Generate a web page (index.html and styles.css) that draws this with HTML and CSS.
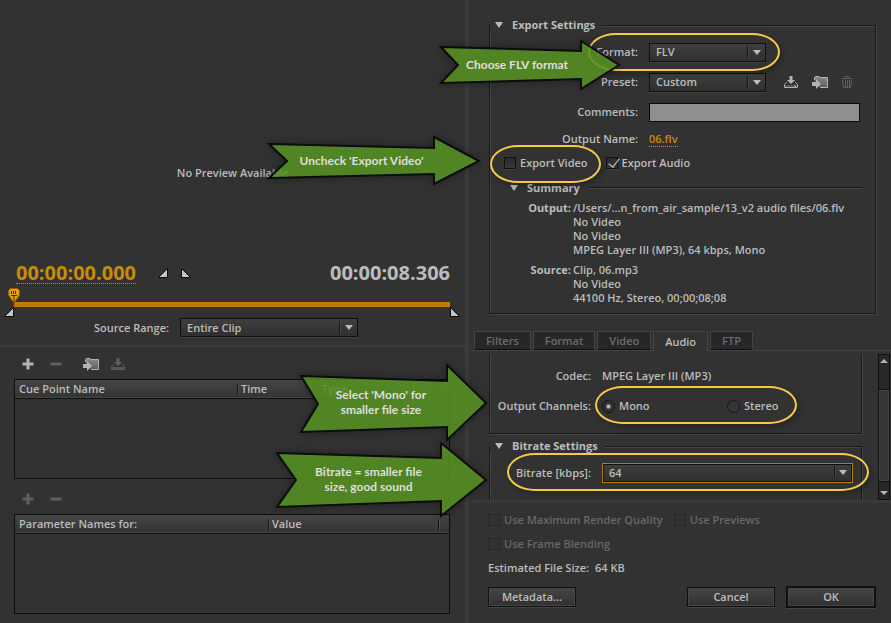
FILE: index.html
```html
<!DOCTYPE html>
<html lang="en">
<head>
    <meta charset="UTF-8">
    <meta name="viewport" content="width=device-width, initial-scale=1.0">
    <title>Export Settings</title>
    <link rel="stylesheet" href="styles.css">
</head>
<body>

    <!-- Shared icons -->
    <svg class="icon-defs" aria-hidden="true">
        <linearGradient id="metal" x1="0" y1="0" x2="0" y2="1">
            <stop offset="0" stop-color="#8c8c8c"/>
            <stop offset="1" stop-color="#5c5c5c"/>
        </linearGradient>
        <symbol id="icon-save" viewBox="0 0 16 14">
            <path d="M4 7.5 H3.5 L1.5 9.5 V12.5 H14.5 V9.5 L12.5 7.5 H12" fill="none" stroke="currentColor"/>
            <path d="M2 10 H14 V12 H2 Z" fill="#555"/>
            <path d="M6.5 1 H9.5 V5 H12 L8 9 L4 5 H6.5 Z" fill="currentColor"/>
            <path d="M11 11 H13" stroke="currentColor"/>
        </symbol>
        <symbol id="icon-import" viewBox="0 0 18 14">
            <path d="M3.5 5 V2.5 L4.5 1.5 H8 L9 2.5 H16.5 V12.5 H9" fill="url(#metal)" stroke="currentColor"/>
            <path d="M1 7 H5 V4 L10 9 L5 14 V11 H1 Z" fill="currentColor"/>
        </symbol>
        <symbol id="icon-trash" viewBox="0 0 12 14">
            <path d="M0.5 3.5 H11.5 M4 3 V1.5 H8 V3 M1.5 5 L2.5 12.5 H9.5 L10.5 5 M4.5 5 V12 M6.5 5 V12 M8.5 5 V12" fill="none" stroke="currentColor"/>
        </symbol>
        <symbol id="icon-plus" viewBox="0 0 12 12">
            <path d="M6 0.5 V11.5 M0.5 6 H11.5" stroke="currentColor" stroke-width="3"/>
        </symbol>
        <symbol id="icon-minus" viewBox="0 0 12 12">
            <path d="M0.5 6 H11.5" stroke="currentColor" stroke-width="3"/>
        </symbol>
        <symbol id="icon-in" viewBox="0 0 10 10">
            <path d="M0.5 9.5 H9.5 V0.5 Z" fill="#c4c4c4" stroke="#0c0c0c"/>
        </symbol>
        <symbol id="icon-out" viewBox="0 0 10 10">
            <path d="M0.5 0.5 V9.5 H9.5 Z" fill="#c4c4c4" stroke="#0c0c0c"/>
        </symbol>
    </svg>

    <div class="dialog">

        <!-- Preview, timeline and cue points -->
        <div class="left-side">
            <section class="preview">
                <p class="no-preview">No Preview Available</p>
                <div class="timecodes">
                    <a class="timecode current" href="#">00:00:00.000</a>
                    <span class="in-out">
                        <button class="icon-btn" aria-label="Set in point"><svg width="10" height="10"><use href="#icon-in"/></svg></button>
                        <button class="icon-btn" aria-label="Set out point"><svg width="10" height="10"><use href="#icon-out"/></svg></button>
                    </span>
                    <span class="timecode">00:00:08.306</span>
                </div>
                <div class="timeline">
                    <svg class="playhead" width="12" height="19" viewBox="0 0 12 19">
                        <path d="M6 13 V19" stroke="#e01010"/>
                        <path d="M2.5 0.5 H9.5 L11.5 2.5 V7 L7 13.5 H5 L0.5 7 V2.5 Z" fill="#e2a00c" stroke="#8f6200"/>
                        <path d="M3.5 3 V6 M5.5 3 V6 M7.5 3 V6 M3 7.5 H9 M6 8 V13" stroke="#4a3300"/>
                    </svg>
                    <svg class="mark-in" width="10" height="10"><use href="#icon-in"/></svg>
                    <svg class="mark-out" width="10" height="10"><use href="#icon-out"/></svg>
                </div>
                <div class="source-range">
                    <label for="range">Source Range:</label>
                    <span class="select"><select id="range"><option>Entire Clip</option></select></span>
                </div>
            </section>

            <section class="cue-points">
                <div class="toolbar">
                    <button class="icon-btn" aria-label="Add cue point"><svg width="12" height="12"><use href="#icon-plus"/></svg></button>
                    <button class="icon-btn off" aria-label="Remove cue point"><svg width="12" height="12"><use href="#icon-minus"/></svg></button>
                    <button class="icon-btn import" aria-label="Import cue points"><svg width="18" height="14"><use href="#icon-import"/></svg></button>
                    <button class="icon-btn off" aria-label="Save cue points"><svg width="16" height="14"><use href="#icon-save"/></svg></button>
                </div>
                <div class="list">
                    <table class="cue-table">
                        <thead>
                            <tr><th>Cue Point Name</th><th>Time</th><th>Type</th><th></th></tr>
                        </thead>
                    </table>
                </div>
                <div class="toolbar second">
                    <button class="icon-btn off" aria-label="Add parameter"><svg width="12" height="12"><use href="#icon-plus"/></svg></button>
                    <button class="icon-btn off" aria-label="Remove parameter"><svg width="12" height="12"><use href="#icon-minus"/></svg></button>
                </div>
                <div class="list">
                    <table class="param-table">
                        <thead>
                            <tr><th>Parameter Names for:</th><th>Value</th><th></th></tr>
                        </thead>
                    </table>
                </div>
            </section>
        </div>

        <div class="splitter"></div>

        <!-- Export settings -->
        <div class="right-side">
            <fieldset class="group export">
                <legend>Export Settings</legend>
                <div class="row">
                    <label for="format">Format:</label>
                    <span class="select"><select id="format"><option>FLV</option></select></span>
                </div>
                <div class="row">
                    <label for="preset">Preset:</label>
                    <span class="select"><select id="preset"><option>Custom</option></select></span>
                    <span class="preset-icons">
                        <button class="icon-btn" aria-label="Save preset"><svg width="16" height="14"><use href="#icon-save"/></svg></button>
                        <button class="icon-btn" aria-label="Import preset"><svg width="18" height="14"><use href="#icon-import"/></svg></button>
                        <button class="icon-btn off" aria-label="Delete preset"><svg width="12" height="14"><use href="#icon-trash"/></svg></button>
                    </span>
                </div>
                <div class="row">
                    <label for="comments">Comments:</label>
                    <input type="text" id="comments" class="comments">
                </div>
                <div class="row name-row">
                    <span class="label">Output Name:</span>
                    <a class="file-link" href="#">06.flv</a>
                </div>
                <div class="checks">
                    <label><input type="checkbox">Export Video</label>
                    <label><input type="checkbox" checked>Export Audio</label>
                </div>
                <h2 class="summary-title">Summary</h2>
                <dl class="summary">
                    <dt>Output:</dt>
                    <dd>/Users/...n_from_air_sample/13_v2 audio files/06.flv<br>No Video<br>No Video<br>MPEG Layer III (MP3), 64 kbps, Mono</dd>
                    <dt>Source:</dt>
                    <dd>Clip, 06.mp3<br>No Video<br>44100 Hz, Stereo, 00;00;08;08</dd>
                </dl>
            </fieldset>

            <nav class="tabs">
                <button class="tab">Filters</button>
                <button class="tab">Format</button>
                <button class="tab">Video</button>
                <button class="tab active">Audio</button>
                <button class="tab">FTP</button>
            </nav>

            <div class="tab-panel">
                <div class="scroll-content">
                    <fieldset class="group audio">
                        <legend>Basic Audio Settings</legend>
                        <div class="row">
                            <span class="label">Codec:</span>
                            <span>MPEG Layer III (MP3)</span>
                        </div>
                        <div class="row">
                            <span class="label">Output Channels:</span>
                            <span class="channels">
                                <label><input type="radio" name="channels" checked>Mono</label>
                                <label><input type="radio" name="channels">Stereo</label>
                            </span>
                        </div>
                    </fieldset>
                    <fieldset class="group audio bitrate">
                        <legend>Bitrate Settings</legend>
                        <div class="row">
                            <label for="bitrate">Bitrate [kbps]:</label>
                            <span class="select focused"><select id="bitrate"><option>64</option></select></span>
                        </div>
                    </fieldset>
                </div>
                <div class="scrollbar">
                    <span class="arrow up"></span>
                    <span class="thumb"></span>
                    <span class="arrow down"></span>
                </div>
            </div>

            <div class="bottom">
                <div class="options">
                    <label><input type="checkbox" disabled>Use Maximum Render Quality</label>
                    <label><input type="checkbox" disabled>Use Previews</label>
                </div>
                <div class="options">
                    <label><input type="checkbox" disabled>Use Frame Blending</label>
                </div>
                <p class="file-size">Estimated File Size: <span>64 KB</span></p>
                <div class="buttons">
                    <button class="btn">Metadata...</button>
                    <button class="btn cancel">Cancel</button>
                    <button class="btn ok">OK</button>
                </div>
            </div>
        </div>

        <!-- Tutorial highlights -->
        <div class="ring ring-format"></div>
        <div class="ring ring-video"></div>
        <div class="ring ring-channels"></div>
        <div class="ring ring-bitrate"></div>

        <div class="callout callout-format">
            <svg width="184" height="54"><path d="M4 8 L144 12 V2 L182 26 L144 50 V40 L4 44 L21 26 Z"/></svg>
            <p>Choose FLV format</p>
        </div>
        <div class="callout callout-video">
            <svg width="217" height="54"><path d="M4 9 L169 13 V2 L214 26 L169 49 V39 L4 43 L22 26 Z"/></svg>
            <p>Uncheck 'Export Video'</p>
        </div>
        <div class="callout callout-channels">
            <svg width="192" height="82"><path d="M4 14 L150 19 V3 L189 41 L150 78 V65 L4 70 L21 42 Z"/></svg>
            <p>Select 'Mono' for<br>smaller file size</p>
        </div>
        <div class="callout callout-bitrate">
            <svg width="215" height="80"><path d="M4 13 L168 18 V3 L213 40 L168 76 V61 L4 67 L23 40 Z"/></svg>
            <p>Bitrate = smaller file<br>size, good sound</p>
        </div>
    </div>

</body>
</html>
```
FILE: styles.css
```css
* {
    box-sizing: border-box;
}

body {
    margin: 0;
    background: #323232;
    color: #bcbcbc;
    font-family: 'Open Sans', 'Noto Sans', sans-serif;
    font-size: 11px;
    font-weight: 600;
    line-height: 14px;
}

button, input, select {
    font: inherit;
    color: inherit;
}

p, h2, dl, dd {
    margin: 0;
}

.icon-defs {
    position: absolute;
    width: 0;
    height: 0;
}

.dialog {
    position: relative;
    display: grid;
    grid-template-columns: 1fr 6px 420px;
    min-height: 100vh;
    border-bottom: 1px solid #666;
}

.splitter {
    background: linear-gradient(to right, #3e3e3e, #383838 60%, #2e2e2e);
}

.icon-btn {
    display: flex;
    padding: 0;
    border: none;
    background: none;
    color: #b4b4b4;
}

.icon-btn.off {
    color: #5e5e5e;
}

/* Select boxes */
.select {
    position: relative;
    display: block;
    width: 117px;
}

.select select {
    display: block;
    appearance: none;
    width: 100%;
    height: 19px;
    padding: 0 6px;
    border: 1px solid #101010;
    border-radius: 0;
    background: linear-gradient(#3f3f3f, #2f2f2f);
    box-shadow: 0 1px 0 #404040;
    outline: none;
}

.select::before {
    content: '';
    position: absolute;
    top: 3px;
    right: 17px;
    width: 2px;
    height: 12px;
    background: linear-gradient(to right, #161616 50%, #484848 50%);
}

.select::after {
    content: '';
    position: absolute;
    top: 7px;
    right: 5px;
    border: 4px solid transparent;
    border-top: 5px solid #bcbcbc;
    border-bottom: none;
}

.select.focused select {
    height: 20px;
    border-color: #b87c00;
    box-shadow: inset 0 0 0 1px #101010;
}

.select.focused::after {
    right: 6px;
}

/* Left side */
.left-side {
    display: flex;
    flex-direction: column;
}

.preview {
    padding-bottom: 8px;
    border-bottom: 1px solid #404040;
}

.no-preview {
    padding: 166px 0 82px;
    text-align: center;
}

.timecodes {
    display: flex;
    align-items: flex-start;
    margin: 0 15px 0 16px;
}

.timecode {
    font-size: 20px;
    font-weight: 700;
    line-height: 21px;
}

.timecode.current {
    color: #c68c06;
    text-decoration: none;
    border-bottom: 1px dotted #c68c06;
}

.in-out {
    display: flex;
    flex: 1;
    gap: 13px;
    margin: 6px 0 0 22px;
}

.timeline {
    position: relative;
    height: 5px;
    margin: 18px 15px 11px 14px;
    background: #bb8003;
}

.playhead {
    position: absolute;
    left: -6px;
    top: -14px;
}

.mark-in {
    position: absolute;
    left: -10px;
    top: 5px;
}

.mark-out {
    position: absolute;
    right: -10px;
    top: 5px;
}

.source-range {
    display: flex;
    align-items: center;
    gap: 11px;
    margin-left: 94px;
}

.source-range .select {
    width: 178px;
}

.cue-points {
    flex: 1;
    display: flex;
    flex-direction: column;
    padding: 9px 15px 10px 14px;
    border-top: 2px solid #383838;
}

.toolbar {
    display: flex;
    align-items: center;
    gap: 16px;
    height: 14px;
    margin: 0 0 8px 8px;
}

.toolbar .import {
    margin: 0 -6px 0 4px;
}

.toolbar.second {
    margin-top: 13px;
}

.list {
    flex: 1;
    border: 1px solid #0e0e0e;
}

.list table {
    width: 100%;
    table-layout: fixed;
    border-collapse: collapse;
}

.list tr {
    background: linear-gradient(#464646, #343434);
    border-bottom: 1px solid #0e0e0e;
}

.list th {
    position: relative;
    height: 18px;
    padding: 0 4px;
    text-align: left;
    font-weight: 600;
}

.list th + th::before {
    content: '';
    position: absolute;
    left: 0;
    top: 4px;
    width: 2px;
    height: 11px;
    background: linear-gradient(to right, #161616 50%, #505050 50%);
}

.list th:last-child {
    width: 11px;
}

.cue-table th:nth-child(1) {
    width: 222px;
}

.cue-table th:nth-child(2) {
    width: 81px;
}

.param-table th:nth-child(1) {
    width: 253px;
}

/* Right side */
.right-side {
    display: flex;
    flex-direction: column;
    padding-top: 18px;
}

.group {
    min-width: 0;
    margin: 0;
    padding: 0;
    border: 1px solid #181818;
    box-shadow: 1px 1px 0 #444, inset 1px 1px 0 #444;
}

.group legend,
.summary-title {
    display: flex;
    align-items: center;
    gap: 9px;
    padding: 0 6px 0 5px;
    font-size: 11px;
    font-weight: 700;
    background: #323232;
}

.group legend::before,
.summary-title::before {
    content: '';
    border: 4px solid transparent;
    border-top: 6px solid #bcbcbc;
    border-bottom: none;
}

.export {
    height: 296px;
    margin: 0 15px 0 18px;
}

.row {
    display: grid;
    grid-template-columns: 148px auto 1fr;
    align-items: center;
    column-gap: 11px;
    height: 30px;
}

.row > :first-child {
    text-align: right;
}

.export .row:nth-of-type(1) {
    margin-top: 5px;
}

.preset-icons {
    display: flex;
    gap: 12px;
    margin-left: 6px;
}

.comments {
    grid-column: 2 / 4;
    width: 211px;
    height: 19px;
    border: 1px solid #0a0a0a;
    border-radius: 0;
    background: #8f8f8f;
}

.name-row {
    height: 24px;
}

.file-link {
    color: #c68c06;
    text-decoration: none;
    border-bottom: 1px dotted #c68c06;
}

input[type="checkbox"] {
    position: relative;
    appearance: none;
    width: 12px;
    height: 12px;
    margin: 0;
    border: 1px solid #121212;
    background: linear-gradient(#2b2b2b, #383838);
    box-shadow: 0 1px 0 #404040;
}

input[type="checkbox"]:checked::after {
    content: '';
    position: absolute;
    left: 4px;
    top: -2px;
    width: 5px;
    height: 10px;
    border: solid #d0d0d0;
    border-width: 0 1px 1px 0;
    transform: rotate(38deg);
}

input[type="checkbox"]:disabled {
    border-color: #262626;
    background: #323232;
    box-shadow: none;
}

.checks {
    display: flex;
    gap: 18px;
    height: 24px;
    margin-left: 14px;
}

.checks label,
.options label,
.channels label {
    display: flex;
    align-items: center;
    gap: 4px;
}

.summary-title {
    margin: 6px 13px 0 15px;
}

.summary-title::after {
    content: '';
    flex: 1;
    height: 2px;
    margin-right: -6px;
    background: linear-gradient(#181818 50%, #444 50%);
}

.summary {
    display: grid;
    grid-template-columns: 81px 1fr;
    gap: 6px 2px;
    margin-top: 6px;
    white-space: nowrap;
}

.summary dt {
    text-align: right;
    font-weight: 700;
}

/* Tabs */
.tabs {
    display: flex;
    gap: 2px;
    height: 20px;
    margin-top: 17px;
    padding-left: 3px;
    border-bottom: 1px solid #444;
}

.tab {
    height: 19px;
    padding: 0 11px;
    border: 1px solid #444;
    border-bottom-color: #0e0e0e;
    background: #272727;
    color: #6c6c6c;
}

.tab.active {
    height: 20px;
    border-bottom: none;
    background: #323232;
    color: #bcbcbc;
}

.tab-panel {
    display: flex;
    justify-content: space-between;
    height: 146px;
    margin-top: 3px;
    overflow: hidden;
}

.scroll-content {
    flex: 1;
    margin: -15px 16px 0 18px;
}

.audio {
    height: 95px;
}

.audio .row {
    grid-template-columns: 101px 1fr;
}

.audio .row:nth-of-type(1) {
    margin-top: 8px;
}

.bitrate {
    margin-top: 5px;
}

.bitrate .row:nth-of-type(1) {
    margin-top: 5px;
}

.bitrate .select {
    width: 251px;
}

.channels {
    display: grid;
    grid-template-columns: 125px auto;
}

input[type="radio"] {
    appearance: none;
    width: 13px;
    height: 13px;
    margin: 0;
    border: 1px solid #161616;
    border-radius: 50%;
    background: #353535;
}

input[type="radio"]:checked {
    background: radial-gradient(circle, #c0c0c0 1px, #303030 3px);
}

.scrollbar {
    display: flex;
    flex-direction: column;
    align-items: center;
    width: 12px;
    margin-right: 1px;
    border: 1px solid #101010;
    background: #282828;
}

.arrow {
    border: 4px solid transparent;
}

.arrow.up {
    margin: 4px 0 26px;
    border-top: none;
    border-bottom: 4px solid #b4b4b4;
}

.thumb {
    flex: 1;
    width: 12px;
    border: 1px solid #101010;
    background: #363636;
    box-shadow: inset 0 0 0 1px #444;
}

.arrow.down {
    margin: 9px 0 4px;
    border-bottom: none;
    border-top: 4px solid #b4b4b4;
}

.bottom {
    flex: 1;
    padding: 5px 15px 16px 17px;
    border-top: 3px solid #393939;
}

.options {
    display: flex;
    gap: 11px;
    height: 24px;
    color: #686868;
}

.file-size {
    padding-top: 5px;
    height: 30px;
}

.file-size span {
    margin-left: 3px;
}

.buttons {
    display: flex;
    align-items: center;
}

.btn {
    width: 88px;
    height: 20px;
    padding: 0;
    border: 1px solid #101010;
    background: linear-gradient(#454545, #303030);
    box-shadow: 0 1px 0 #444, inset 0 0 0 1px #464646;
}

.btn.cancel {
    margin-left: auto;
}

.btn.ok {
    width: 90px;
    height: 22px;
    margin-left: 11px;
    border-width: 2px;
}

/* Highlights and arrows, measured from the fixed right side */
.ring {
    position: absolute;
    height: 38px;
    border: 2px solid #f6c94a;
    border-radius: 28px / 19px;
    box-shadow: 2px 3px 6px rgba(0, 0, 0, 0.25);
    pointer-events: none;
}

.ring-format {
    top: 33px;
    right: 111px;
    width: 192px;
}

.ring-video {
    top: 145px;
    right: 290px;
    width: 111px;
}

.ring-channels {
    top: 386px;
    right: 94px;
    width: 202px;
}

.ring-bitrate {
    top: 453px;
    right: 22px;
    width: 362px;
}

.callout {
    position: absolute;
    display: grid;
    color: #dedede;
    font-family: Lato, 'Open Sans', sans-serif;
    font-size: 12px;
    font-weight: 700;
    line-height: 15px;
    text-align: center;
    pointer-events: none;
}

.callout svg,
.callout p {
    grid-area: 1 / 1;
}

.callout p {
    align-self: center;
    z-index: 1;
    padding: 0 24px 3px 0;
}

.callout path {
    fill: rgba(91, 155, 36, 0.82);
    stroke: #0c0c0c;
    stroke-width: 2;
}

.callout svg {
    filter: drop-shadow(0 0 4px rgba(0, 0, 0, 0.4));
}

.callout-format {
    top: 39px;
    right: 270px;
}

.callout-video {
    top: 135px;
    right: 409px;
}

.callout-channels {
    top: 362px;
    right: 402px;
}

.callout-bitrate {
    top: 440px;
    right: 403px;
}
```
